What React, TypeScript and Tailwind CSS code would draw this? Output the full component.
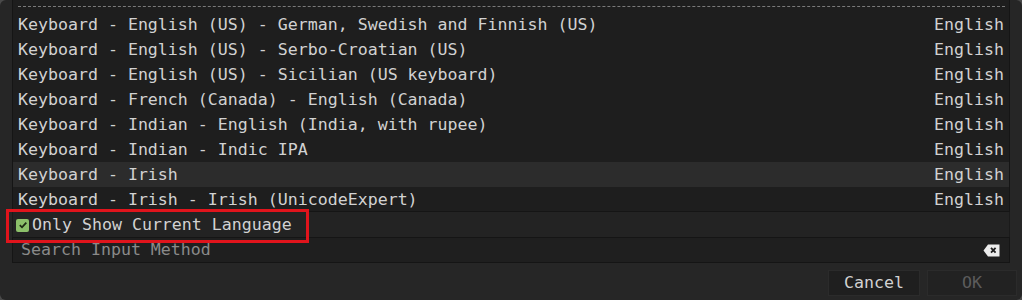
import React from "react";

const rows: { name: string; lang: string; hl?: boolean }[] = [
  { name: "Keyboard - English (US) - German, Swedish and Finnish (US)", lang: "English" },
  { name: "Keyboard - English (US) - Serbo-Croatian (US)", lang: "English" },
  { name: "Keyboard - English (US) - Sicilian (US keyboard)", lang: "English" },
  { name: "Keyboard - French (Canada) - English (Canada)", lang: "English" },
  { name: "Keyboard - Indian - English (India, with rupee)", lang: "English" },
  { name: "Keyboard - Indian - Indic IPA", lang: "English" },
  { name: "Keyboard - Irish", lang: "English", hl: true },
  { name: "Keyboard - Irish - Irish (UnicodeExpert)", lang: "English" },
];

export default function App() {
  return (
    <div className="w-[1022px] h-[300px] bg-[#4a4a4a] overflow-hidden">
      <div
        className="relative w-[1022px] h-[300px] bg-[#262626] rounded-[6px] overflow-hidden text-[16.6px] leading-none text-[#d2d2d2]"
        style={{ fontFamily: '"DejaVu Sans Mono", "Liberation Mono", monospace' }}
      >
        <div className="mx-[12px] w-[998px]">
          {/* list */}
          <div className="h-[212px] border-x border-b border-[#151515] bg-[#1e1e1e] overflow-hidden">
            <div className="relative h-[25px] mt-[-13px] flex items-center justify-between px-[5px] pb-[15px] whitespace-pre">
              <span>Keyboard - English (US) - English (intl., with AltGr dead keys)</span>
              <span>English</span>
              <span className="absolute left-[5px] right-[4px] bottom-[5px] border-t border-dashed border-[#7a7a7a]" />
            </div>
            {rows.map((r) => (
              <div
                key={r.name}
                className={`h-[25px] flex items-center justify-between px-[5px] pt-[2px] whitespace-pre ${
                  r.hl ? "bg-[#2c2c2c]" : ""
                }`}
              >
                <span>{r.name}</span>
                <span>{r.lang}</span>
              </div>
            ))}
          </div>
          {/* checkbox row */}
          <div className="relative h-[25px] flex items-center pl-[3px] pt-[1px] bg-[#232323] border-x border-[#1a1a1a]">
            <span className="w-[13px] h-[13px] rounded-[2px] bg-[#8cc06a] flex items-center justify-center mr-[3px]">
              <svg width="10" height="10" viewBox="0 0 10 10">
                <path d="M1.8 5.2 L4 7.3 L8.3 2.6" fill="none" stroke="#1d2a14" strokeWidth="1.8" />
              </svg>
            </span>
            <span className="whitespace-pre">Only Show Current Language</span>
            <span className="absolute left-[-7px] top-[-3px] w-[303px] h-[34px] border-[3px] border-[#e0141c]" />
          </div>
          {/* search */}
          <div className="h-[26px] flex items-center justify-between pl-[8px] pr-[9px] pt-[1px] bg-[#1f1f1f] border border-[#151515]">
            <span className="text-[#8a8a8a] whitespace-pre">Search Input Method</span>
            <svg width="17" height="13" viewBox="0 0 17 13">
              <path d="M5 0.5 H16.5 V12.5 H5 L0.5 6.5 Z" fill="#ececec" />
              <path d="M8 3.8 L12.6 8.6 M12.6 3.8 L8 8.6" stroke="#1f1f1f" strokeWidth="1.8" />
            </svg>
          </div>
        </div>
        {/* buttons */}
        <div className="flex justify-end gap-[7px] pr-[5px] mt-[7px]">
          <div className="w-[92px] h-[26px] bg-[#1f1f1f] border border-[#2b2b2b] flex items-center justify-center pt-[1px] text-[#d2d2d2]">
            Cancel
          </div>
          <div className="w-[90px] h-[26px] bg-[#222222] border border-[#2b2b2b] flex items-center justify-center pt-[1px] text-[#5c5c5c]">
            OK
          </div>
        </div>
      </div>
    </div>
  );
}
